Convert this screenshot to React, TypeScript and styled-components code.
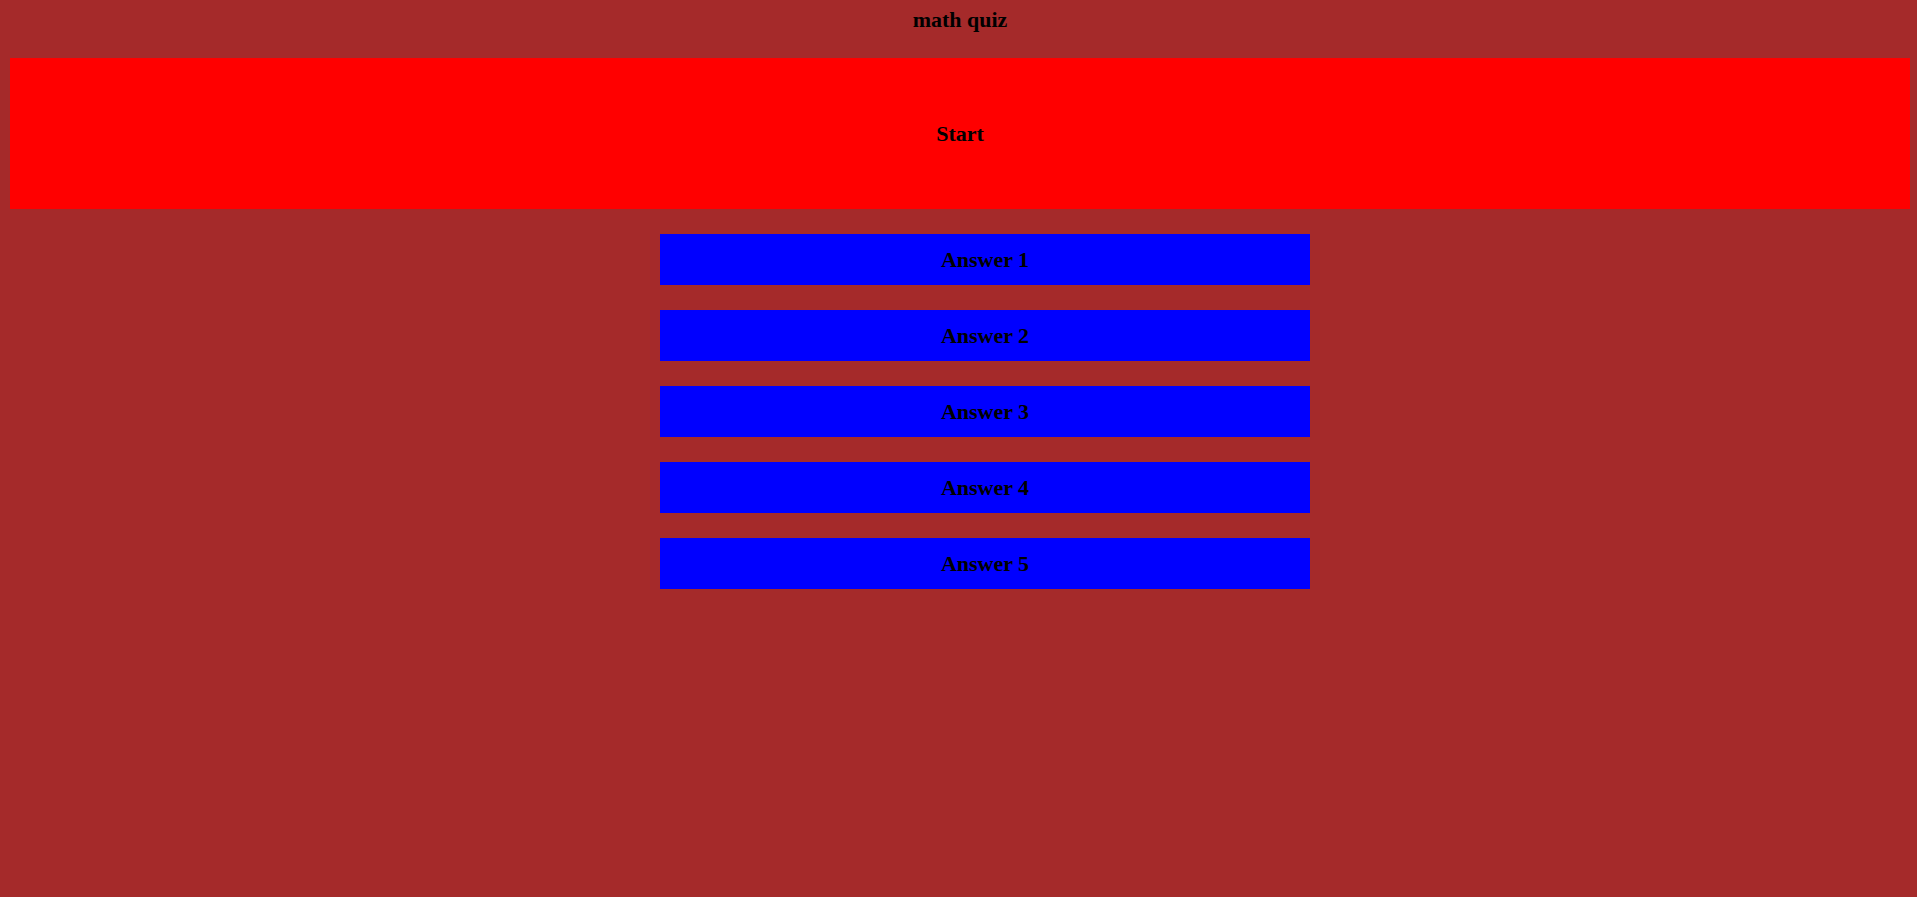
import React, { type FC } from 'react';
import styled, { createGlobalStyle } from 'styled-components';

const GlobalStyle = createGlobalStyle`
  html,
  body {
    margin: 0;
    padding: 0;
    background-color: #a52a2a;
  }

  body {
    min-height: 897px;
    font-family: 'Liberation Serif', 'Times New Roman', serif;
  }
`;

const Page = styled.main`
  display: flex;
  flex-direction: column;
  padding: 7px 7px 10px 10px;
`;

const Title = styled.h1`
  margin: 0 0 26px;

  font-size: 22px;
  font-weight: bold;
  line-height: 25px;
  text-align: center;
  color: #000;
`;

const StartButton = styled.button`
  display: flex;
  align-items: center;
  justify-content: center;
  height: 151px;
  padding: 0;
  border: none;
  background-color: #ff0000;

  font-family: inherit;
  font-size: 22px;
  font-weight: bold;
  color: #000;

  cursor: pointer;
`;

const AnswerList = styled.ul`
  display: flex;
  flex-direction: column;
  gap: 25px;
  width: 650px;
  margin: 25px 0 0 650px;
  padding: 0;

  list-style: none;
`;

const AnswerButton = styled.button`
  display: flex;
  align-items: center;
  justify-content: center;
  width: 100%;
  height: 51px;
  padding: 0;
  border: none;
  background-color: #0000ff;

  font-family: inherit;
  font-size: 22px;
  font-weight: bold;
  color: #000;

  cursor: pointer;
`;

const answers = ['Answer 1', 'Answer 2', 'Answer 3', 'Answer 4', 'Answer 5'];

const App: FC = () => (
  <>
    <GlobalStyle />
    <Page>
      <Title>math quiz</Title>
      <StartButton>Start</StartButton>

      <AnswerList>
        {answers.map(answer => (
          <li key={answer}>
            <AnswerButton>{answer}</AnswerButton>
          </li>
        ))}
      </AnswerList>
    </Page>
  </>
);

export default App;
